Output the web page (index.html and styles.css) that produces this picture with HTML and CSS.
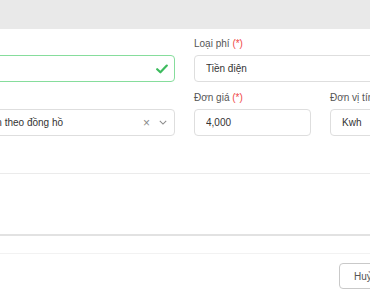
FILE: index.html
```html
<!DOCTYPE html>
<html lang="vi">
<head>
    <meta charset="UTF-8">
    <meta name="viewport" content="width=device-width, initial-scale=1.0">
    <title>Thêm phí</title>
    <link rel="stylesheet" href="styles.css">
</head>
<body>

    <div class="modal">
        <div class="modal-top"></div>

        <!-- Fee form -->
        <form class="fee-form">
            <div class="field">
                <label>Tên phí</label>
                <div class="input success">
                    <span class="value">Điện</span>
                    <svg class="check" viewBox="0 0 12 10" width="12" height="10">
                        <path d="M1.2 5.2 L4.4 8.3 L10.8 1.6" fill="none" stroke="#3dbb5e" stroke-width="2.2" stroke-linecap="round" stroke-linejoin="round"/>
                    </svg>
                </div>
            </div>

            <div class="field wide">
                <label>Loại phí <span class="req">(*)</span></label>
                <div class="input"><span class="value">Tiền điện</span></div>
            </div>

            <div class="field">
                <label>Cách tính</label>
                <div class="input select">
                    <span class="value">Tính tiền theo đồng hồ</span>
                    <span class="clear">×</span>
                    <svg class="arrow" viewBox="0 0 10 6" width="8" height="5">
                        <path d="M1 1 L5 5 L9 1" fill="none" stroke="#8a8a8a" stroke-width="1.3"/>
                    </svg>
                </div>
            </div>

            <div class="field">
                <label>Đơn giá <span class="req">(*)</span></label>
                <div class="input"><span class="value">4,000</span></div>
            </div>

            <div class="field">
                <label>Đơn vị tính</label>
                <div class="input"><span class="value">Kwh</span></div>
            </div>
        </form>

        <div class="modal-space"></div>

        <div class="modal-footer">
            <button type="button" class="btn">Huỷ</button>
        </div>
    </div>

</body>
</html>
```

FILE: styles.css
```css
/* General Styles */
body {
    margin: 0;
    font-family: 'Liberation Sans', Arial, sans-serif;
    font-size: 10px;
    color: #333;
    background: white;
    overflow: hidden;
}

.modal {
    width: 370px;
    height: 300px;
    overflow: hidden;
}

.modal-top {
    height: 29px;
    background: #e9e9e9;
}

/* Form */
.fee-form {
    display: grid;
    grid-template-columns: 224px 117px 117px;
    column-gap: 19px;
    row-gap: 8px;
    margin-left: -49px;
    padding: 7px 0 37px;
    border-bottom: 1px solid #ebebeb;
}

.field.wide {
    grid-column: span 2;
}

label {
    display: block;
    line-height: 16px;
    margin-bottom: 3px;
    color: #555;
}

.req {
    color: #f04848;
}

.input {
    display: flex;
    align-items: center;
    height: 27px;
    box-sizing: border-box;
    padding: 0 11px;
    border: 1px solid #dedede;
    border-radius: 4px;
    background: white;
}

.input .value {
    flex: 1;
    white-space: nowrap;
    overflow: hidden;
}

.input.success {
    border-color: #86dd9c;
    padding-right: 6px;
}

.check {
    margin-left: 8px;
}

.select {
    padding-right: 7px;
}

.select .clear {
    color: #8a8a8a;
    font-size: 12px;
    margin-right: 9px;
}

/* Lower area */
.modal-space {
    height: 60px;
    border-bottom: 2px solid #e2e2e2;
}

.modal-footer {
    margin-top: 17px;
    border-top: 1px solid #f2f2f2;
    display: flex;
    padding: 9px 0 0 339px;
}

.btn {
    height: 26px;
    padding: 0 14px;
    border: 1px solid #c9c9c9;
    border-radius: 4px;
    background: white;
    font-family: inherit;
    font-size: 10px;
    color: #555;
    white-space: nowrap;
}
```
